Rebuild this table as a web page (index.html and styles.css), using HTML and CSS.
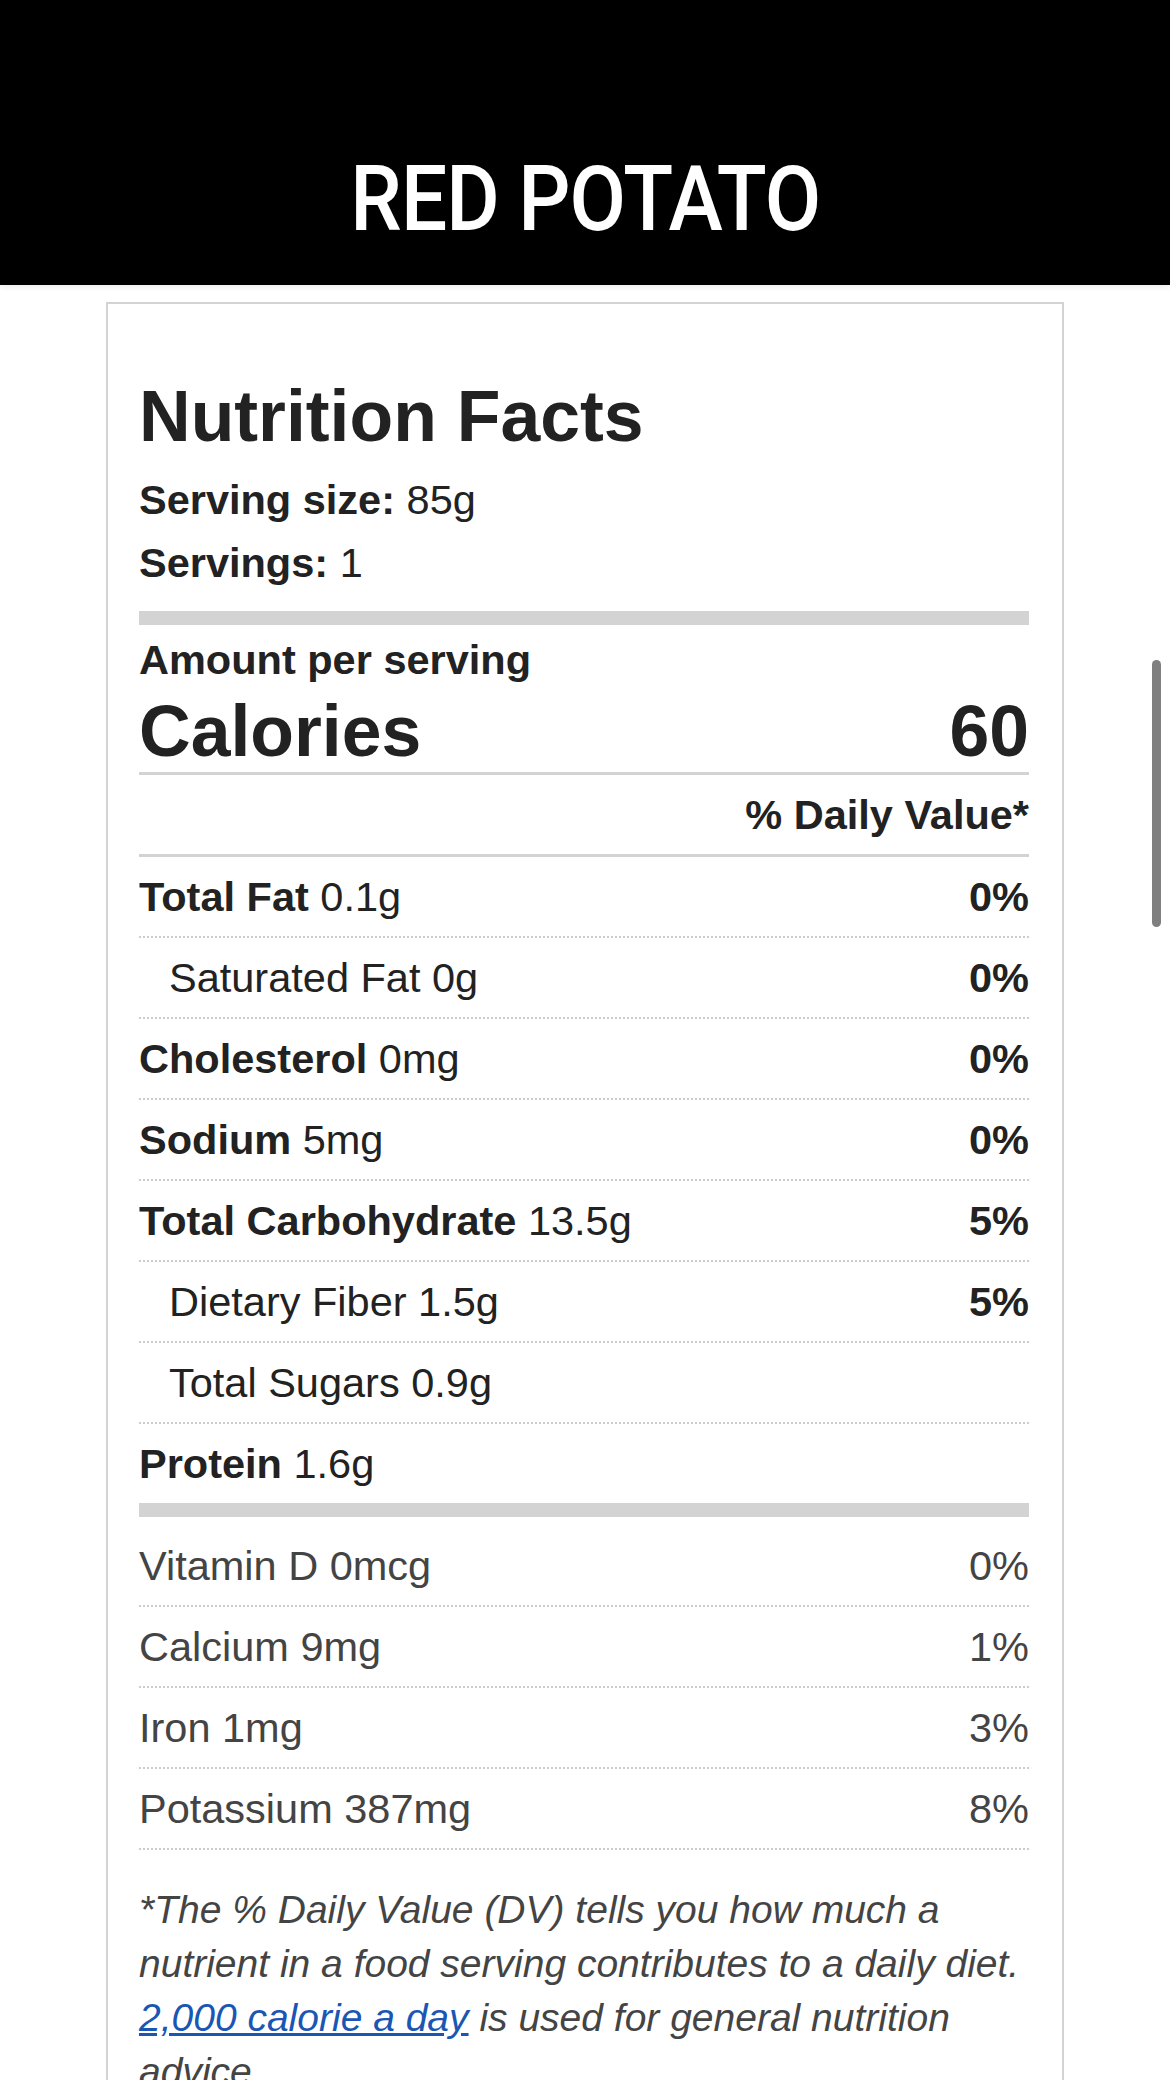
FILE: index.html
```html
<!DOCTYPE html>
<html lang="en">
<head>
<meta charset="utf-8">
<title>Red Potato - Nutrition Facts</title>
<link rel="stylesheet" href="styles.css">
</head>
<body>
<header class="top">
  <h1 class="top-title">RED POTATO</h1>
</header>
<main class="page">
  <section class="label">
    <h2 class="label-title">Nutrition Facts</h2>
    <p class="serving"><b>Serving size:</b> 85g</p>
    <p class="serving"><b>Servings:</b> 1</p>
    <div class="bar bar-top"></div>
    <p class="amount">Amount per serving</p>
    <div class="calories"><span>Calories</span><span>60</span></div>
    <div class="dv-head">% Daily Value*</div>
    <div class="row"><span><b>Total Fat</b> 0.1g</span><b>0%</b></div>
    <div class="row sub"><span>Saturated Fat 0g</span><b>0%</b></div>
    <div class="row"><span><b>Cholesterol</b> 0mg</span><b>0%</b></div>
    <div class="row"><span><b>Sodium</b> 5mg</span><b>0%</b></div>
    <div class="row"><span><b>Total Carbohydrate</b> 13.5g</span><b>5%</b></div>
    <div class="row sub"><span>Dietary Fiber 1.5g</span><b>5%</b></div>
    <div class="row sub"><span>Total Sugars 0.9g</span></div>
    <div class="row last"><span><b>Protein</b> 1.6g</span></div>
    <div class="bar bar-mid"></div>
    <div class="row vit"><span>Vitamin D 0mcg</span><span>0%</span></div>
    <div class="row vit"><span>Calcium 9mg</span><span>1%</span></div>
    <div class="row vit"><span>Iron 1mg</span><span>3%</span></div>
    <div class="row vit"><span>Potassium 387mg</span><span>8%</span></div>
    <p class="note">*The % Daily Value (DV) tells you how much a nutrient in a food serving contributes to a daily diet. <a href="#">2,000 calorie a day</a> is used for general nutrition advice.</p>
  </section>
</main>
<div class="scroll-indicator"></div>
</body>
</html>
```
FILE: styles.css
```css
html, body {
  margin: 0;
  padding: 0;
  background: #ffffff;
}
body {
  font-family: "Liberation Sans", Arial, sans-serif;
  color: #222222;
  overflow: hidden;
}
.top {
  background: #000000;
  height: 285px;
  box-sizing: border-box;
  padding-top: 155px;
  box-shadow: 0 2px 6px rgba(0, 0, 0, 0.08);
  display: flex;
  justify-content: center;
}
.top-title {
  margin: 0;
  color: #ffffff;
  font-family: Roboto, "Liberation Sans", sans-serif;
  font-weight: 500;
  font-size: 90px;
  line-height: 90px;
  letter-spacing: -1px;
  transform: scaleX(0.91);
}
.page {
  padding-top: 17px;
  display: flex;
  justify-content: center;
}
.label {
  width: 958px;
  box-sizing: border-box;
  border: 2px solid #d3d3d3;
  padding: 72px 33px 40px 31px;
  min-height: 1900px;
}
.label-title {
  margin: 0 0 13px;
  font-size: 71.5px;
  line-height: 80px;
  font-weight: 700;
}
.serving {
  margin: 0;
  font-size: 41.5px;
  line-height: 62px;
}
.serving + .serving {
  margin-top: 1px;
}
.bar {
  background: #d3d3d3;
  height: 14px;
}
.bar-top {
  margin-top: 17px;
  margin-bottom: 10px;
}
.amount {
  margin: 0;
  font-size: 41.5px;
  line-height: 50px;
  font-weight: 700;
}
.calories {
  display: flex;
  justify-content: space-between;
  align-items: baseline;
  font-size: 71.5px;
  font-weight: 700;
  line-height: 80px;
  margin-top: 6px;
  padding-bottom: 1px;
  border-bottom: 3px solid #d3d3d3;
}
.dv-head {
  text-align: right;
  font-size: 41.5px;
  font-weight: 700;
  line-height: 51px;
  padding: 14px 0 14px;
  border-bottom: 3px solid #d3d3d3;
}
.row {
  display: flex;
  justify-content: space-between;
  align-items: baseline;
  font-size: 41.5px;
  line-height: 51px;
  padding: 14px 0;
  border-bottom: 2px dotted #cccccc;
}
.row.sub span {
  padding-left: 30px;
}
.row.last {
  border-bottom: none;
}
.bar-mid {
  margin-top: 0;
  height: 14px;
  margin-bottom: 9px;
}
.row.vit {
  color: #444444;
}
.note {
  margin: 33px 0 0;
  font-size: 39px;
  line-height: 54px;
  font-style: italic;
  color: #444444;
}
.note a {
  color: #1a56b4;
  text-decoration: underline;
}
.scroll-indicator {
  position: absolute;
  left: 1152px;
  top: 660px;
  width: 9px;
  height: 267px;
  border-radius: 5px;
  background: #7f7f7f;
}
```
